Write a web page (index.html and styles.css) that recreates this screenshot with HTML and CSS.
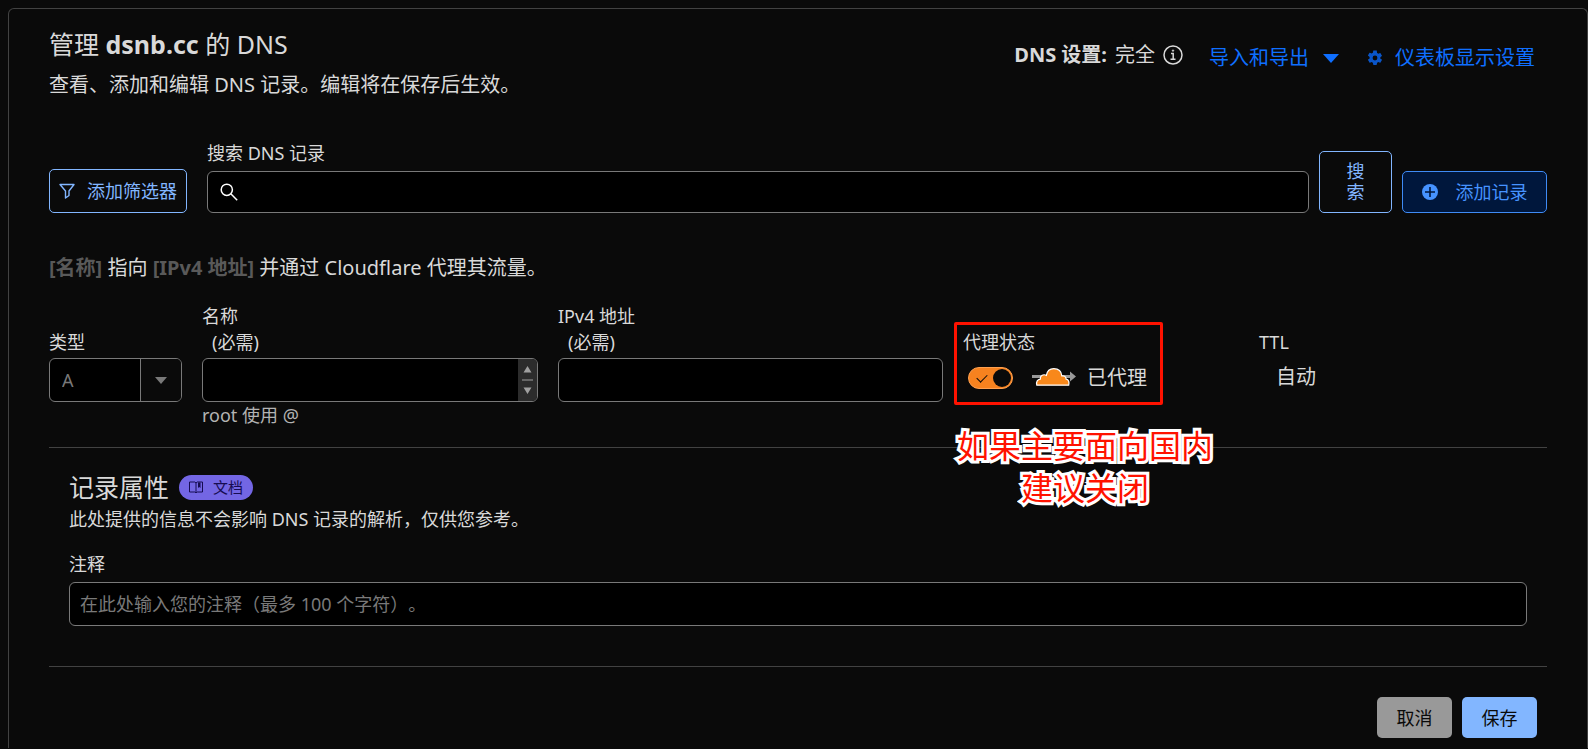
FILE: index.html
```html
<!DOCTYPE html>
<html lang="zh-CN">
<head>
<meta charset="utf-8">
<title>DNS 记录</title>
<link rel="stylesheet" href="styles.css">
</head>
<body>
<main class="panel">
  <header class="header">
    <div class="heading">
      <h1 class="title">管理 <strong>dsnb.cc</strong> 的 DNS</h1>
      <p class="subtitle">查看、添加和编辑 DNS 记录。编辑将在保存后生效。</p>
    </div>
    <div class="header-status">
      <strong>DNS 设置:</strong>
      <span>完全</span>
      <svg class="icon-info" viewBox="0 0 20 20" width="20" height="20" fill="none" stroke="currentColor" stroke-width="1.5"><circle cx="10" cy="10" r="9"/><path d="M8 8.5h2.2V14M7.5 14.2h5"/><circle cx="10" cy="5.6" r=".7" fill="currentColor" stroke-width="1"/></svg>
    </div>
    <nav class="header-links">
      <a href="#" class="link">导入和导出
        <svg viewBox="0 0 16 9" width="16" height="9" fill="currentColor"><path d="M0 0h16L8 9z"/></svg>
      </a>
      <a href="#" class="link link-settings">
        <svg class="icon-gear" viewBox="0 0 24 24" width="18" height="18" fill="currentColor"><path d="M19.14 12.94c.04-.3.06-.61.06-.94s-.02-.64-.07-.94l2.03-1.58a.49.49 0 0 0 .12-.61l-1.92-3.32a.49.49 0 0 0-.59-.22l-2.39.96a7 7 0 0 0-1.62-.94l-.36-2.54A.48.48 0 0 0 13.92 2h-3.84a.48.48 0 0 0-.48.41l-.36 2.54c-.59.24-1.13.57-1.62.94l-2.39-.96a.48.48 0 0 0-.59.22L2.72 8.47a.48.48 0 0 0 .12.61l2.03 1.58c-.05.3-.09.63-.09.94s.02.64.07.94l-2.03 1.58a.49.49 0 0 0-.12.61l1.92 3.32c.12.22.37.29.59.22l2.39-.96c.5.38 1.03.7 1.62.94l.36 2.54c.05.24.24.41.48.41h3.84c.24 0 .44-.17.47-.41l.36-2.54a7 7 0 0 0 1.62-.94l2.39.96c.22.08.47 0 .59-.22l1.92-3.32a.48.48 0 0 0-.12-.61zM12 15.2a3.2 3.2 0 1 1 0-6.4 3.2 3.2 0 0 1 0 6.4z"/></svg>
        仪表板显示设置
      </a>
    </nav>
  </header>

  <form class="toolbar">
    <button type="button" class="btn btn-filter">
      <svg viewBox="0 0 16 16" width="16" height="16" fill="none" stroke="currentColor" stroke-width="1.4" stroke-linejoin="round"><path d="M1 1.500h14L10 8v4.500L6.500 15V8z"/></svg>
      添加筛选器
    </button>
    <div class="search">
      <label class="label" for="search">搜索 DNS 记录</label>
      <div class="search-box">
        <svg viewBox="0 0 18 18" width="18" height="18" fill="none" stroke="currentColor" stroke-width="1.5"><circle cx="6.800" cy="6.800" r="5.600"/><path d="M10.800 10.800l6.400 6.400"/></svg>
        <input id="search" class="search-input" type="text">
      </div>
    </div>
    <button type="button" class="btn btn-search">搜<br>索</button>
    <button type="button" class="btn btn-add">
      <svg viewBox="0 0 16 16" width="16" height="16"><circle cx="8" cy="8" r="8" fill="currentColor"/><path d="M8 3v10M3 8h10" stroke="#00173c" stroke-width="1.6"/></svg>
      添加记录
    </button>
  </form>

  <p class="summary"><strong>[名称]</strong> 指向 <strong>[IPv4 地址]</strong> 并通过 Cloudflare 代理其流量。</p>

  <form>
    <div class="fields">
      <div class="field field-short">
        <label class="label" for="type">类型</label>
        <div class="select-box">
          <select id="type" class="select" disabled><option>A</option></select>
          <span class="select-arrow"><svg viewBox="0 0 12 7" width="12" height="7" fill="currentColor"><path d="M0 0h12L6 7z"/></svg></span>
        </div>
      </div>
      <div class="field">
        <label class="label" for="name">名称<span class="required">(必需)</span></label>
        <div class="name-box">
          <input id="name" class="name-input" type="text">
          <span class="scroller">
            <svg viewBox="0 0 11 28" width="11" height="28" fill="currentColor"><path d="M5.500 0l4 6.500h-8zM0 13.500h11v1H0zM1.500 21.500h8l-4 6.500z"/></svg>
          </span>
        </div>
        <p class="help">root 使用 @</p>
      </div>
      <div class="field">
        <label class="label" for="ipv4">IPv4 地址<span class="required">(必需)</span></label>
        <input id="ipv4" class="input" type="text">
      </div>
      <div class="field field-short field-proxy">
        <label class="label" for="proxy">代理状态</label>
        <div class="proxy-row">
          <input id="proxy" class="toggle" type="checkbox" checked>
          <svg class="cloud" viewBox="0 0 44 18" width="44" height="18"><path d="M0 7h38V3.500l6 5-6 5V10H0z" fill="#999"/><path d="M4.800 17.200C4 13.500 5.500 11.500 8.300 11.200 8 7.500 11.500 5.800 14.400 7.400 15.200 2.600 18.200.7 21.800.7c4.600 0 7.600 2.900 8 7.200 2.400-.5 4.200.7 4.400 3.300 2.600.3 3.200 3.200 2.500 6z" fill="#f8881b" stroke="#fff" stroke-width="1.200"/></svg>
          <span class="status">已代理</span>
        </div>
        <div class="mark-frame"></div>
        <p class="mark-note">如果主要面向国内<br>建议关闭</p>
      </div>
      <div class="field field-short">
        <span class="label">TTL</span>
        <span class="ttl">自动</span>
      </div>
    </div>

    <section class="attributes">
      <div class="attributes-head">
        <h2 class="title">记录属性</h2>
        <a href="#" class="docs">
          <svg viewBox="0 0 14 12" width="14" height="12" fill="none" stroke="currentColor"><path d="M.5 1h5.300L7 2l1.200-1h5.300v10H8.200L7 12l-1.200-1H.5zM7 2v9.500"/><path d="M9 1.500h2.500V7L10.200 6 9 7z" fill="currentColor" stroke="none"/></svg>
          文档
        </a>
      </div>
      <p class="description">此处提供的信息不会影响 DNS 记录的解析，仅供您参考。</p>
      <label class="label comment-label" for="comment">注释</label>
      <input id="comment" class="input" type="text" placeholder="在此处输入您的注释（最多 100 个字符）。">
    </section>

    <div class="actions">
      <button type="button" class="action action-cancel">取消</button>
      <button type="submit" class="action action-save">保存</button>
    </div>
  </form>
</main>
</body>
</html>
```
FILE: styles.css
```css
* {
  box-sizing: border-box;
}

body {
  margin: 0;
  padding: 8px 0 0 8px;
  background: #0a0a0a;
  color: #d9d9d9;
  font-family: "Noto Sans", "Noto Sans CJK SC", sans-serif;
  font-size: 18px;
  line-height: 26px;
}

h1, h2, p {
  margin: 0;
  font-weight: 400;
}

input, select, button {
  font: inherit;
  color: inherit;
}

svg {
  flex: none;
}

.panel {
  border: 1px solid #424242;
  border-bottom: 0;
  border-radius: 6px 6px 0 0;
  padding: 18px 40px 10px;
}

.header {
  display: flex;
  align-items: flex-start;
}

.heading {
  flex: 1;
}

.title {
  font-size: 25px;
  line-height: 34px;
}

.subtitle {
  margin-top: 9px;
  font-size: 20px;
  line-height: 30px;
}

.header-status,
.header-links,
.link {
  display: flex;
  align-items: center;
  font-size: 20px;
  line-height: 28px;
}

.header-status {
  gap: 8px;
  margin-top: 14px;
}

.header-links {
  gap: 27px;
  margin: 17px 12px 0 26px;
}

.link {
  gap: 14px;
  color: #0f6fff;
  text-decoration: none;
}

.link-settings {
  gap: 11px;
}

.icon-gear {
  color: #0a55c8;
}

.toolbar {
  display: flex;
  align-items: flex-end;
  margin-top: 40px;
}

.btn {
  display: flex;
  align-items: center;
  justify-content: center;
  padding: 0 9px;
  border: 1px solid #82b6ff;
  border-radius: 5px;
  background: transparent;
  color: #82b6ff;
  line-height: 21px;
}

.btn-filter {
  gap: 12px;
  height: 44px;
}

.btn-search {
  width: 73px;
  height: 62px;
  margin-right: 10px;
}

.btn-add {
  gap: 18px;
  width: 145px;
  height: 42px;
  border-color: #3f8bf5;
  background: #00173c;
  color: #4693ff;
}

.label {
  display: block;
}

.search {
  flex: 1;
  margin: 0 10px 0 20px;
}

.search-box {
  display: flex;
  align-items: center;
  gap: 10px;
  height: 42px;
  margin-top: 5px;
  padding: 0 12px;
  border: 1px solid #797979;
  border-radius: 6px;
  background: #000;
  color: #fff;
}

.search-input,
.name-input {
  flex: 1;
  min-width: 0;
  height: 100%;
  padding: 0 10px;
  border: 0;
  background: transparent;
}

.summary {
  margin-top: 40px;
  font-size: 20px;
  line-height: 30px;
}

.summary strong {
  color: #595959;
}

.fields {
  display: grid;
  grid-template-columns: 133px 336fr 385fr 276fr 288fr;
  gap: 20px;
  align-items: start;
  margin-top: 20px;
  padding-bottom: 19px;
  border-bottom: 1px solid #424242;
}

.field-short {
  margin-top: 26px;
}

.required {
  display: block;
  padding-left: 10px;
}

.input,
.select-box,
.name-box {
  width: 100%;
  height: 44px;
  margin-top: 3px;
  border: 1px solid #797979;
  border-radius: 6px;
  background: #000;
}

.input {
  display: block;
  padding: 0 10px;
}

.input::placeholder {
  color: #797979;
  opacity: 1;
  text-spacing-trim: space-all;
}

.select-box,
.name-box {
  display: flex;
  overflow: hidden;
}

.select {
  flex: 1;
  appearance: none;
  padding: 0 12px;
  border: 0;
  background: transparent;
  color: #797979;
  opacity: 1;
}

.select-arrow {
  display: flex;
  align-items: center;
  justify-content: center;
  width: 41px;
  border-left: 1px solid #797979;
  background: #0a0a0a;
  color: #797979;
}

.scroller {
  display: flex;
  align-items: center;
  justify-content: center;
  width: 19px;
  background: #2c2c2c;
  color: #9f9f9f;
}

.help {
  color: #b3b3b3;
}

.field-proxy {
  position: relative;
}

.proxy-row {
  display: flex;
  align-items: center;
  height: 40px;
  margin-top: 3px;
  padding-left: 5px;
}

.toggle {
  display: grid;
  grid-template-columns: 1fr 18px;
  align-items: center;
  appearance: none;
  width: 45px;
  height: 22px;
  margin: 0;
  padding: 0 1px;
  border: 1px solid #ffa04f;
  border-radius: 11px;
  background: #f6821f;
}

.toggle::before {
  content: "";
  justify-self: center;
  width: 9px;
  height: 5px;
  margin-bottom: 3px;
  border: solid #0a0a0a;
  border-width: 0 0 1px 1px;
  transform: rotate(-45deg);
}

.toggle::after {
  content: "";
  height: 18px;
  border-radius: 50%;
  background: #0a0a0a;
}

.cloud {
  margin: 0 11px 3px 19px;
}

.status,
.ttl {
  font-size: 20px;
}

.ttl {
  display: block;
  padding: 0 17px;
  line-height: 44px;
}

.mark-frame {
  position: absolute;
  top: -7px;
  left: -9px;
  width: 209px;
  height: 83px;
  border: 3px solid #ff1200;
  border-radius: 2px;
}

.mark-note {
  position: absolute;
  top: 96px;
  left: -6px;
  color: #ff1200;
  font-size: 32px;
  line-height: 42px;
  text-align: center;
  white-space: nowrap;
  -webkit-text-stroke: 6px #fff;
  paint-order: stroke fill;
}

.attributes {
  padding: 22px 20px 40px;
  border-bottom: 1px solid #424242;
}

.attributes-head {
  display: flex;
  align-items: center;
  gap: 10px;
}

.docs {
  display: flex;
  align-items: center;
  gap: 10px;
  height: 25px;
  padding: 0 10px;
  border-radius: 13px;
  background: #7366e4;
  color: #160c52;
  font-size: 15px;
  text-decoration: none;
}

.description {
  margin-top: 2px;
}

.comment-label {
  margin: 19px 0 5px;
}

.actions {
  display: flex;
  justify-content: flex-end;
  gap: 10px;
  margin-top: 30px;
  padding-right: 10px;
}

.action {
  width: 75px;
  height: 41px;
  padding: 0;
  border: 0;
  border-radius: 5px;
  color: #0a0a0a;
}

.action-cancel {
  background: #999;
}

.action-save {
  background: #82b6ff;
}
```
